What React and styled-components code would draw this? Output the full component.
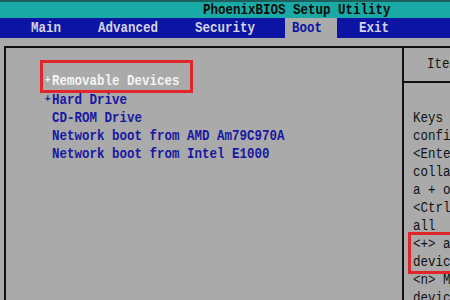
import React from "react"
import styled, { createGlobalStyle } from "styled-components"

const GlobalStyle = createGlobalStyle`
  html, body {
    margin: 0;
    padding: 0;
    width: 450px;
    height: 300px;
    overflow: hidden;
    background: #aaaaaa;
  }
  * { box-sizing: border-box; }
`

const Screen = styled.div`
  width: 450px;
  height: 300px;
  display: flex;
  flex-direction: column;
  overflow: hidden;
  font-family: "Liberation Mono", "DejaVu Sans Mono", monospace;
  font-size: 12.5px;
  font-weight: bold;
  white-space: nowrap;
`

const TitleBar = styled.div`
  height: 18px;
  border-top: 2px solid #1d5f5c;
  background: #1aaaa6;
  color: #0a0a0a;
  padding-left: 203px;
  line-height: 16px;
`

const MenuBar = styled.div`
  height: 20px;
  background: #0c14a4;
  display: flex;
  gap: 15px;
  padding-left: 24px;
`

const MenuItem = styled.div`
  padding: 0 15px 0 7px;
  line-height: 20px;
  color: ${props => props.active ? '#0c14a4' : '#d4d4e4'};
  background: ${props => props.active ? '#aaaaaa' : 'transparent'};
`

const Stretch = styled.span`
  display: inline-block;
  transform: scaleY(1.22);
`

const Body = styled.div`
  flex: 1;
  display: flex;
  padding: 8px 0 0 4px;
  background: #aaaaaa;
`

const LeftPanel = styled.div`
  width: 400px;
  flex-shrink: 0;
  border: 2px solid #111;
  border-bottom: none;
  padding: 12px 0 0 34px;
  color: #1818a2;
`

const RightPanel = styled.div`
  flex: 1;
  min-width: 0;
  border-top: 2px solid #111;
  overflow: hidden;
  color: #111;
`

const HelpHeader = styled.div`
  height: 35px;
  border-bottom: 2px solid #111;
  line-height: 33px;
  padding-left: 23px;
  font-weight: normal;
`

const HelpBody = styled.div`
  padding-top: 26px;
  font-weight: normal;
`

const Line = styled.div`
  height: 18px;
  line-height: 18px;
  padding-left: ${props => props.indent || 0}px;
  color: ${props => props.selected ? '#f4f4f4' : 'inherit'};
`

const Marker = styled.span`
  display: inline-block;
  width: 7px;
  font-size: 9px;
  vertical-align: 1px;
`

const Highlight = styled.div`
  border: 3px solid #e0262a;
  padding: ${props => props.pad || '0'};
  margin: ${props => props.m || '0'};
  width: ${props => props.w || 'auto'};
`

const HelpLine = styled(Line)`
  padding-left: ${props => props.indent ?? 9}px;
`

const help1 = [
  'Keys used to view or',
  'configure devices:',
  '<Enter> expands or',
  'collapses devices with',
  'a + or -',
  '<Ctrl+Enter> expands',
  'all',
]
const help2 = ['<+> and <-> moves the', 'device up or down.']
const help3 = ['<n> May move removable', 'device between Hard']

export default function App() {
  return (
    <Screen>
      <GlobalStyle />
      <TitleBar><Stretch>PhoenixBIOS Setup Utility</Stretch></TitleBar>
      <MenuBar>
        {['Main', 'Advanced', 'Security', 'Boot', 'Exit'].map(m => (
          <MenuItem key={m} active={m === 'Boot'}><Stretch>{m}</Stretch></MenuItem>
        ))}
      </MenuBar>
      <Body>
        <LeftPanel>
          <Highlight pad="9px 0 0 2px" m="0 0 -2px 0" w="153px">
            <Line selected><Stretch><Marker>+</Marker>Removable Devices</Stretch></Line>
          </Highlight>
          <Line indent={5}><Stretch><Marker>+</Marker>Hard Drive</Stretch></Line>
          <Line indent={12}><Stretch>CD-ROM Drive</Stretch></Line>
          <Line indent={12}><Stretch>Network boot from AMD Am79C970A</Stretch></Line>
          <Line indent={12}><Stretch>Network boot from Intel E1000</Stretch></Line>
        </LeftPanel>
        <RightPanel>
          <HelpHeader><Stretch>Item Specific Help</Stretch></HelpHeader>
          <HelpBody>
            {help1.map(t => <HelpLine key={t}><Stretch>{t}</Stretch></HelpLine>)}
            <Highlight m="-3px 0 -3px 4px" w="200px">
              {help2.map(t => <HelpLine key={t} indent={2}><Stretch>{t}</Stretch></HelpLine>)}
            </Highlight>
            {help3.map(t => <HelpLine key={t}><Stretch>{t}</Stretch></HelpLine>)}
          </HelpBody>
        </RightPanel>
      </Body>
    </Screen>
  )
}
